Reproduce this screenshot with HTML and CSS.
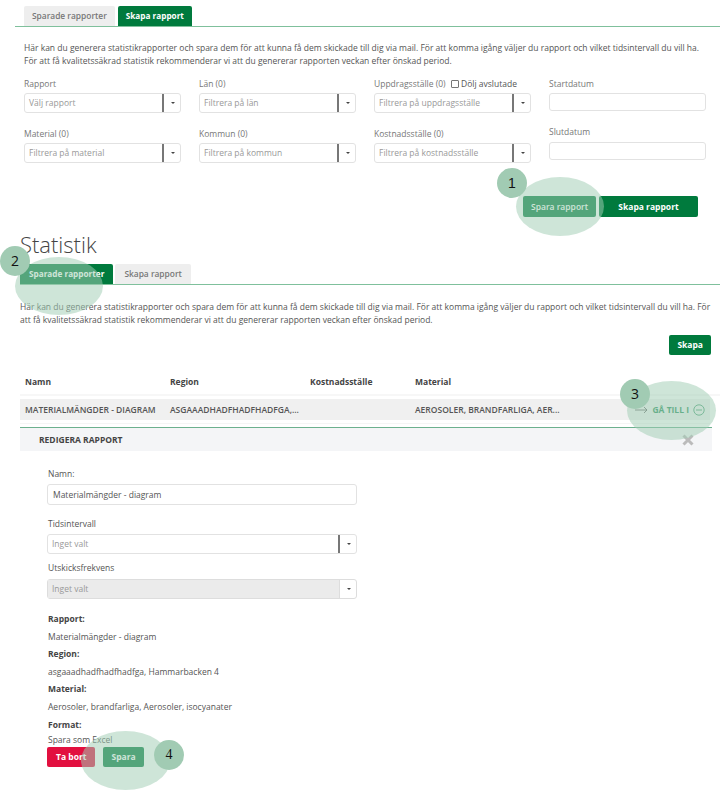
FILE: index.html
```html
<!DOCTYPE html>
<html>
  <head>
    <title>Statistik</title>
    <meta charset="UTF-8" />
    <link rel="stylesheet" href="styles.css">
  </head>
  <body>
    <div class="create-view">
      <div class="tabs">
        <div class="tab">Sparade rapporter</div>
        <div class="tab active">Skapa rapport</div>
      </div>
      <p class="intro">
        Här kan du generera statistikrapporter och spara dem för att kunna få dem skickade till dig via mail. För att komma igång väljer du rapport och vilket tidsintervall du vill ha. För att få kvalitetssäkrad statistik rekommenderar vi att du genererar rapporten veckan efter önskad period.
      </p>
      <div class="filters">
        <div class="filter">
          <label>Rapport</label>
          <div class="select"><span>Välj rapport</span><b></b></div>
        </div>
        <div class="filter">
          <label>Län (0)</label>
          <div class="select"><span>Filtrera på län</span><b></b></div>
        </div>
        <div class="filter">
          <label>Uppdragsställe (0) <i class="check"></i> <em>Dölj avslutade</em></label>
          <div class="select"><span>Filtrera på uppdragsställe</span><b></b></div>
        </div>
        <div class="filter date">
          <label>Startdatum</label>
          <div class="text-input"></div>
        </div>
        <div class="filter">
          <label>Material (0)</label>
          <div class="select"><span>Filtrera på material</span><b></b></div>
        </div>
        <div class="filter">
          <label>Kommun (0)</label>
          <div class="select"><span>Filtrera på kommun</span><b></b></div>
        </div>
        <div class="filter">
          <label>Kostnadsställe (0)</label>
          <div class="select"><span>Filtrera på kostnadsställe</span><b></b></div>
        </div>
        <div class="filter date end">
          <label>Slutdatum</label>
          <div class="text-input"></div>
        </div>
      </div>
      <div class="create-actions">
        <div class="btn save">Spara rapport</div>
        <div class="btn wide">Skapa rapport</div>
      </div>
    </div>

    <div class="saved-view">
      <h1>Statistik</h1>
      <div class="tabs">
        <div class="tab active">Sparade rapporter</div>
        <div class="tab">Skapa rapport</div>
      </div>
      <p class="intro">
        Här kan du generera statistikrapporter och spara dem för att kunna få dem skickade till dig via mail. För att komma igång väljer du rapport och vilket tidsintervall du vill ha. För att få kvalitetssäkrad statistik rekommenderar vi att du genererar rapporten veckan efter önskad period.
      </p>
      <div class="create-row"><div class="btn">Skapa</div></div>

      <div class="table-head">
        <div class="col-name">Namn</div>
        <div class="col-region">Region</div>
        <div class="col-cost">Kostnadsställe</div>
        <div class="col-material">Material</div>
      </div>
      <div class="table-row">
        <div class="col-name">MATERIALMÄNGDER - DIAGRAM</div>
        <div class="col-region">ASGAAADHADFHADFHADFGA,...</div>
        <div class="col-cost"></div>
        <div class="col-material">AEROSOLER, BRANDFARLIGA, AER...</div>
        <div class="goto">
          <svg class="goto-arrow" width="13" height="8" viewBox="0 0 13 8"><path d="M0 4h12M9 1l3 3-3 3" fill="none" stroke="#555" stroke-width=".8"/></svg>
          <span>GÅ TILL I</span>
          <svg width="12" height="12" viewBox="0 0 12 12"><circle cx="6" cy="6" r="5.2" fill="none" stroke="#2b8f5e" stroke-width=".8"/><path d="M3 6h6" stroke="#2b8f5e" stroke-width=".8"/></svg>
        </div>
      </div>

      <div class="edit-bar">
        <span>REDIGERA RAPPORT</span>
        <svg width="12" height="12" viewBox="0 0 12 12"><path d="M1.5 1.5l9 9M10.5 1.5l-9 9" stroke="#bbb" stroke-width="3"/></svg>
      </div>

      <div class="edit-form">
        <label>Namn:</label>
        <div class="text-input value">Materialmängder - diagram</div>
        <label class="interval">Tidsintervall</label>
        <div class="select"><span>Inget valt</span><b></b></div>
        <label class="frequency">Utskicksfrekvens</label>
        <div class="select disabled"><span>Inget valt</span><b></b></div>
        <dl>
          <dt>Rapport:</dt>
          <dd>Materialmängder - diagram</dd>
          <dt>Region:</dt>
          <dd>asgaaadhadfhadfhadfga, Hammarbacken 4</dd>
          <dt>Material:</dt>
          <dd>Aerosoler, brandfarliga, Aerosoler, isocyanater</dd>
          <dt>Format:</dt>
          <dd class="last">Spara som Excel</dd>
        </dl>
        <div class="form-actions">
          <div class="btn danger">Ta bort</div>
          <div class="btn">Spara</div>
        </div>
      </div>
    </div>

    <div class="halo halo-1"></div>
    <div class="halo halo-2"></div>
    <div class="halo halo-3"></div>
    <div class="halo halo-4"></div>
    <div class="badge badge-1">1</div>
    <div class="badge badge-2">2</div>
    <div class="badge badge-3">3</div>
    <div class="badge badge-4">4</div>
  </body>
</html>
```

FILE: styles.css
```css
body {
  margin: 0;
  font-family: "Open Sans", sans-serif;
  font-size: 8.5px;
  color: #555;
  background: #fff;
  height: 790px;
  overflow: hidden;
  position: relative;
}

.create-view {
  padding: 6px 3px 0 15px;
}

.tabs {
  display: flex;
  gap: 3px;
  border-bottom: 1px solid #7fc09c;
  padding-left: 9px;
  height: 20px;
}

.tab {
  background: #eee;
  color: #777;
  font-size: 8.4px;
  font-weight: 600;
  line-height: 20px;
  padding: 0 8px;
  border-radius: 2px 2px 0 0;
  white-space: nowrap;
}

.tab.active {
  background: #007a3d;
  color: #fff;
  font-size: 8.2px;
  font-weight: 700;
}

.intro {
  margin: 14px 0 0;
  padding-left: 9px;
  padding-right: 8px;
  line-height: 13px;
}

.filters {
  display: grid;
  grid-template-columns: 157px 157px 157px 157px;
  column-gap: 18px;
  row-gap: 14px;
  margin-top: 10px;
  padding-left: 9px;
}

.filter label {
  display: block;
  height: 16px;
  line-height: 13px;
  color: #777;
  white-space: nowrap;
}

.filter label em {
  font-style: normal;
  color: #555;
}

.check {
  display: inline-block;
  width: 6px;
  height: 6px;
  border: 1px solid #777;
  border-radius: 1px;
  margin-left: 3px;
  vertical-align: -1px;
}

.filter.end {
  margin-top: -2px;
}

.filter.end label {
  height: 17px;
}

.select {
  display: flex;
  height: 18px;
  background: #fff;
  border: 1px solid #e2e2e2;
  border-radius: 3px;
  line-height: 18px;
  color: #999;
}

.select span {
  flex: 1;
  padding-left: 4px;
  border-right: 2px solid #777;
}

.select b {
  width: 16px;
  position: relative;
}

.select b::after {
  content: "";
  position: absolute;
  left: 7px;
  top: 8px;
  border: 2px solid transparent;
  border-top: 2px solid #444;
  border-bottom: 0;
}

.select.disabled {
  border-color: #ddd;
}

.select.disabled span {
  background: #ebebeb;
  border-right: 1px solid #ddd;
}

.text-input {
  height: 16px;
  background: #fff;
  border: 1px solid #e2e2e2;
  border-radius: 3px;
}

.create-actions {
  display: flex;
  justify-content: flex-end;
  gap: 3px;
  margin-top: 33px;
  padding-right: 22px;
}

.btn {
  background: #007a3d;
  color: #fff;
  font-weight: 700;
  line-height: 21px;
  padding: 0 8px;
  border-radius: 2px;
  text-align: center;
  white-space: nowrap;
}

.btn.wide {
  width: 83px;
}

.btn.save {
  width: 57px;
  font-weight: 600;
}

.saved-view {
  padding-left: 20px;
  padding-right: 3px;
}

.saved-view h1 {
  margin: 8px 0 0;
  font-size: 22px;
  font-weight: 300;
  line-height: 39px;
  color: #444;
}

.saved-view .tabs {
  padding-left: 0;
  gap: 2px;
}

.saved-view .tab {
  padding: 0 9px;
}

.saved-view .intro {
  margin-top: 15px;
  padding-left: 0;
}

.create-row {
  display: flex;
  justify-content: flex-end;
  padding-right: 9px;
  margin-top: 9px;
}

.create-row .btn {
  line-height: 20px;
}

.table-head,
.table-row {
  display: flex;
  align-items: center;
  padding-left: 5px;
}

.table-head {
  margin-top: 18px;
  height: 16px;
  padding-bottom: 5px;
  border-bottom: 2px solid #f7f7f7;
  font-weight: 700;
  color: #444;
}

.table-row {
  margin-top: 3px;
  height: 21px;
  width: 690px;
  box-sizing: border-box;
  background: #f0f0f0;
  box-shadow: 0 3px 0 #fff, 0 4px 0 #f5f5f5;
  font-weight: 600;
  color: #555;
}

.col-name {
  width: 145px;
  white-space: nowrap;
}

.col-region {
  width: 140px;
  white-space: nowrap;
}

.col-cost {
  width: 105px;
}

.goto {
  margin-left: auto;
  display: flex;
  align-items: center;
  gap: 4px;
  padding-right: 5px;
  color: #2b8f5e;
  font-weight: 700;
}

.goto-arrow {
  margin-right: 0;
}

.edit-bar {
  margin-top: 7px;
  width: 692px;
  height: 24px;
  box-sizing: border-box;
  border-top: 1px solid #6cb08e;
  background: #f4f5f7;
  display: flex;
  align-items: center;
  justify-content: space-between;
  padding: 0 18px 0 19px;
  font-weight: 700;
  color: #444;
}

.edit-form {
  padding-left: 27px;
  width: 310px;
  margin-top: 16px;
}

.edit-form label {
  display: block;
  line-height: 13px;
  padding-left: 1px;
}

.edit-form .text-input.value {
  margin-top: 4px;
  height: 19px;
  line-height: 19px;
  padding-left: 5px;
  color: #555;
}

.edit-form .interval {
  margin-top: 12px;
}

.edit-form .frequency {
  margin-top: 7px;
}

.edit-form .select {
  margin-top: 4px;
}

.edit-form .select.disabled {
  margin-top: 5px;
}

.edit-form dl {
  margin: 13px 0 0;
  padding-left: 1px;
}

.edit-form dt {
  font-weight: 700;
  color: #444;
  line-height: 13.6px;
}

.edit-form dd {
  margin: 4px 0;
  line-height: 13.6px;
}

.edit-form dd.last {
  margin: 1.4px 0 0;
}

.form-actions {
  display: flex;
  gap: 8px;
  margin-top: 1px;
}

.form-actions .btn {
  line-height: 20px;
}

.btn.danger {
  background: #e2103f;
  padding: 0 9px;
}

.halo {
  position: absolute;
  border-radius: 50%;
  background: rgba(162, 205, 181, 0.52);
}

.halo-1 { left: 516px; top: 177px; width: 88px; height: 59px; }
.halo-2 { left: 15px; top: 257px; width: 88px; height: 58px; }
.halo-3 { left: 627px; top: 381px; width: 89px; height: 59px; }
.halo-4 { left: 81px; top: 731px; width: 89px; height: 59px; }

.badge {
  position: absolute;
  width: 30px;
  height: 30px;
  border-radius: 50%;
  background: #a1cbb3;
  color: #111;
  font-size: 14px;
  line-height: 30px;
  text-align: center;
}

.badge-1 { left: 497px; top: 168px; font-family: "Liberation Sans", sans-serif; }
.badge-2 { left: 0; top: 246px; }
.badge-3 { left: 620px; top: 379px; }
.badge-4 { left: 154px; top: 740px; font-family: "Liberation Serif", serif; }
```
